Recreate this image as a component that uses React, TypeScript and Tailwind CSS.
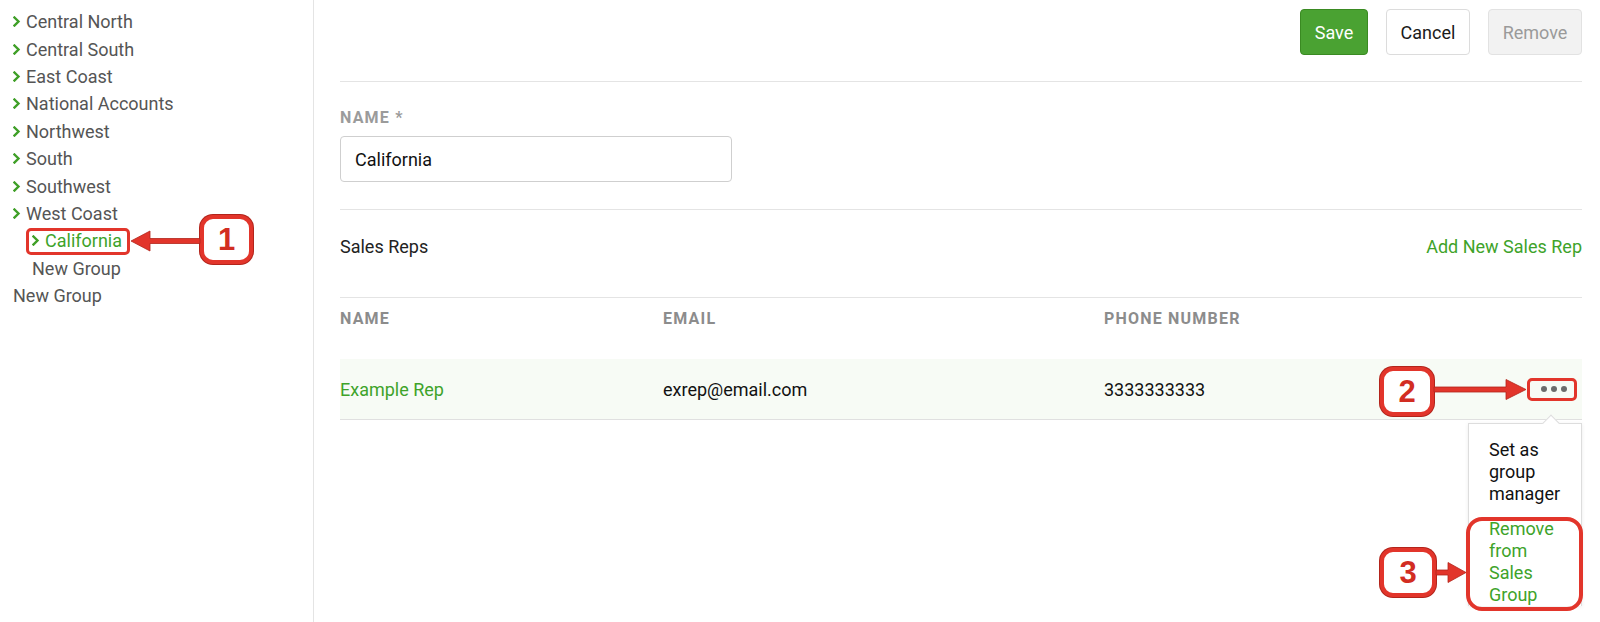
import React from "react";

const groups = [
  "Central North",
  "Central South",
  "East Coast",
  "National Accounts",
  "Northwest",
  "South",
  "Southwest",
  "West Coast",
];

const Chevron: React.FC<{ className?: string }> = ({ className }) => (
  <svg
    className={className}
    width="8"
    height="11"
    viewBox="0 0 8 11"
    fill="none"
  >
    <path
      d="M1.5 1.5 L5.5 5.5 L1.5 9.5"
      stroke="#3f9f27"
      strokeWidth="2.4"
      strokeLinecap="square"
    />
  </svg>
);

const Badge: React.FC<{ n: string; className: string }> = ({ n, className }) => (
  <div
    className={
      "absolute flex items-center justify-center rounded-[13px] border-[4px] border-[#e2352b] bg-white text-[31px] leading-none font-bold text-[#d22d22] shadow-[0_0_0_1px_#b3241b] font-['Liberation_Sans',sans-serif] " +
      className
    }
  >
    {n}
  </div>
);

const App: React.FC = () => {
  return (
    <div className="relative flex h-[622px] w-[1600px] overflow-hidden bg-white font-['Roboto',sans-serif]">
      {/* sidebar tree */}
      <aside className="w-[314px] shrink-0 border-r border-[#e4e4e4] pt-[8px] text-[18px] text-[#555555]">
        {groups.map((g) => (
          <div key={g} className="flex h-[27.4px] items-center pl-[13px]">
            <Chevron className="mr-[5px]" />
            <span>{g}</span>
          </div>
        ))}
        <div className="flex h-[27.4px] items-center pl-[32px] text-[#3ea32a]">
          <Chevron className="mr-[5px]" />
          <span>California</span>
        </div>
        <div className="flex h-[27.4px] items-center pl-[32px]">New Group</div>
        <div className="flex h-[27.4px] items-center pl-[13px]">New Group</div>
      </aside>

      <main className="min-w-0 flex-1 pl-[26px] pr-[18px]">
        <div className="flex h-[82px] items-start justify-end gap-[18px] border-b border-[#e4e4e4] pt-[9px] text-[18px]">
          <button className="h-[46px] w-[68px] rounded-[4px] border border-[#3a8a22] bg-[#4aa232] text-white">
            Save
          </button>
          <button className="h-[46px] w-[84px] rounded-[4px] border border-[#dcdcdc] bg-white text-[#1a1a1a]">
            Cancel
          </button>
          <button className="h-[46px] w-[94px] rounded-[4px] border border-[#e2e2e2] bg-[#f2f2f2] text-[#9a9a9a]">
            Remove
          </button>
        </div>

        <div className="border-b border-[#e4e4e4] pt-[28px] pb-[27px]">
          <div className="text-[16px] leading-[16px] font-bold tracking-[1.2px] text-[#9b9b9b]">
            NAME *
          </div>
          <div className="mt-[10px] flex h-[46px] w-[392px] items-center rounded-[4px] border border-[#cfcfcf] px-[14px] text-[18px] text-[#111111]">
            California
          </div>
        </div>

        <div className="flex h-[88px] items-start justify-between border-b border-[#e4e4e4] pt-[23px] text-[18px] leading-[27px]">
          <span className="text-[#222222]">Sales Reps</span>
          <span className="text-[#3ea32a]">Add New Sales Rep</span>
        </div>

        <div className="grid h-[42px] grid-cols-[323px_441px_1fr] items-center text-[16px] font-bold tracking-[1.2px] text-[#8c8c8c]">
          <span>NAME</span>
          <span>EMAIL</span>
          <span>PHONE NUMBER</span>
        </div>

        <div className="mt-[19px] grid h-[61px] grid-cols-[323px_441px_1fr_auto] items-center border-b border-[#e0e0e0] bg-[#f7fbf5] text-[18px]">
          <span className="text-[#3ea32a]">Example Rep</span>
          <span className="text-[#111111]">exrep@email.com</span>
          <span className="text-[#111111]">3333333333</span>
          <span className="relative mr-[6px] flex h-[20px] w-[44px] items-center justify-center gap-[4px]">
            <span className="h-[6px] w-[6px] rounded-full bg-[#6b6b6b]" />
            <span className="h-[6px] w-[6px] rounded-full bg-[#6b6b6b]" />
            <span className="h-[6px] w-[6px] rounded-full bg-[#6b6b6b]" />
          </span>
        </div>

        {/* actions popover */}
        <div className="flex justify-end">
          <div className="relative mt-[3px] w-[114px] border border-b-0 border-[#dddddd] bg-white pl-[20px] pr-[8px] pt-[15px] text-[18px] leading-[22px] shadow-[0_1px_4px_rgba(0,0,0,0.08)]">
            <div className="absolute -top-[7px] right-[24px] h-[12px] w-[12px] rotate-45 border-t border-l border-[#dddddd] bg-white" />
            <div className="text-[#111111]">Set as group manager</div>
            <div className="mt-[13px] text-[#3ea32a]">Remove from Sales Group</div>
          </div>
        </div>
      </main>

      {/* annotation overlays */}
      <div className="absolute top-[228px] left-[26px] h-[27px] w-[104px] rounded-[5px] border-[3px] border-[#e2352b]" />
      <Badge n="1" className="top-[215px] left-[200px] h-[49px] w-[53px]" />
      <div className="absolute top-[378px] left-[1527px] h-[23px] w-[50px] rounded-[5px] border-[3px] border-[#e2352b]" />
      <Badge n="2" className="top-[367px] left-[1380px] h-[49px] w-[54px]" />
      <div className="absolute top-[517px] left-[1466px] h-[94px] w-[117px] rounded-[16px] border-[4px] border-[#e2352b]" />
      <Badge n="3" className="top-[548px] left-[1380px] h-[49px] w-[56px]" />

      <svg className="pointer-events-none absolute top-0 left-0" width="1600" height="622">
        <g fill="#e2352b" stroke="#b3241b" strokeWidth="0.8">
          <path d="M200 238.5 L150 238.5 L150 231 L131 241 L150 251 L150 243.5 L200 243.5 Z" />
          <path d="M1434 387 L1506 387 L1506 379.5 L1526 389.5 L1506 399.5 L1506 392 L1434 392 Z" />
          <path d="M1436 570 L1448 570 L1448 562.5 L1466 572.5 L1448 582.5 L1448 575 L1436 575 Z" />
        </g>
      </svg>
    </div>
  );
};

export default App;
